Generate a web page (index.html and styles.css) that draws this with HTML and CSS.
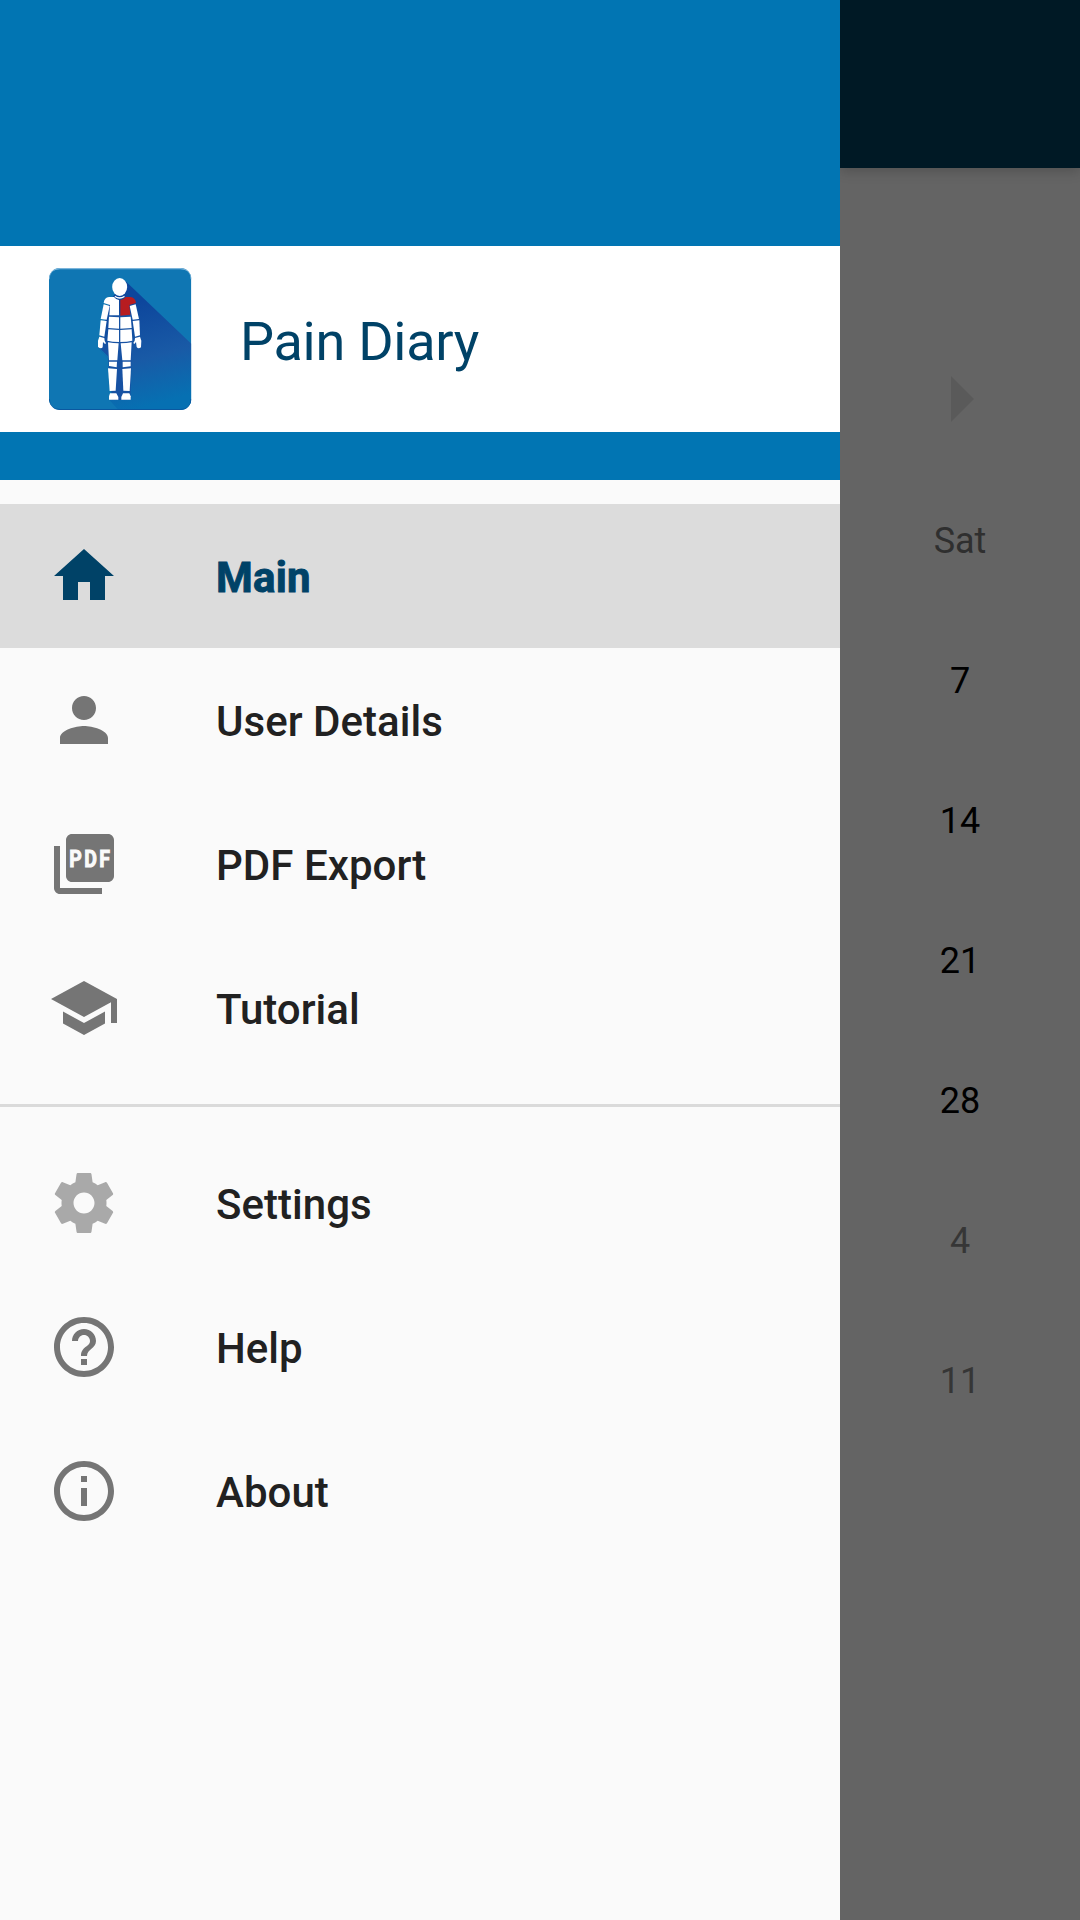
FILE: index.html
```html
<!DOCTYPE html>
<html lang="en">
<head>
<meta charset="utf-8">
<title>Pain Diary</title>
<link rel="stylesheet" href="styles.css">
</head>
<body>
<div class="screen">
  <aside class="drawer">
    <header class="drawer-header">
      <div class="brand">
        <svg class="logo" viewBox="24 21 432 432">
          <defs>
            <linearGradient id="shade" gradientUnits="userSpaceOnUse" x1="270" y1="130" x2="350" y2="430">
              <stop offset="0" stop-color="#0d469c"/>
              <stop offset=".55" stop-color="#195aa6"/>
              <stop offset="1" stop-color="#0670b2"/>
            </linearGradient>
            <clipPath id="tile"><rect x="27" y="24" width="427" height="426" rx="33"/></clipPath>
          </defs>
          <g clip-path="url(#tile)">
            <rect x="27" y="24" width="427" height="427" fill="#0f76b3"/>
            <path d="M257 64L454 251V451H236L208 420L236 330L174 263L210 120Z" fill="url(#shade)"/>
            <path d="M27 58Q27 25.500 60 25.500H421Q454 25.500 454 58" fill="none" stroke="#7bb5db" stroke-width="4"/>
            <path d="M28 417Q28 448.500 60 448.500H421Q453 448.500 453 417" fill="none" stroke="#0b58a0" stroke-width="3"/>
          </g>
          <path d="M174 263L208 300L208 420H232L240 260Z" fill="#0f76b3"/>
          <path d="M176 262L206 291L205 240Z" fill="#1752a3"/>
          <path d="M204 160H276V250L271 420H208L205 300Z" fill="#1752a3"/>
          <path d="M203 326L208 420L215 420L212 326Z" fill="#0f76b3"/>
          <path d="M229 380L250 250L252 418H236Z" fill="#1752a3"/>
          <g fill="#fff">
            <ellipse cx="239" cy="81" rx="22.500" ry="27"/>
            <path d="M225 107Q239 117 253 107L254 111Q239 122 224 111Z"/>
            <path d="M222 111Q228 119 237 120V166H208L210 135L191 129Q193 113 207 111Z"/>
            <path d="M191 133L209 138L200 179L182 177Z"/>
            <path d="M182 181L200 183L193 230L178 226Z"/>
            <path d="M178 230L193 234L194 242L198 250L195 252L189 246L188 262Q183 268 174 261L174 242Z"/>
            <path d="M287 133L269 138L278 179L297 177Z"/>
            <path d="M278 183L298 181L300 226L285 230Z"/>
            <path d="M285 234L300 230L304 242L303 262Q295 268 290 261L288 246L283 252L280 249L284 242Z"/>
            <path d="M207 170L237 172V206L205 204Z"/>
            <path d="M241 172L272 170L275 204L241 206Z"/>
            <path d="M205 208L237 210V246Q216 246 202 242Z"/>
            <path d="M241 210L275 208L277 242Q262 246 241 246Z"/>
            <path d="M204 247Q220 250 236 250L232 301H207Z"/>
            <path d="M242 250Q260 250 275 247L272 301H247Z"/>
            <path d="M207 305H231L230 322L207 318Z"/>
            <path d="M248 305H272V319L248 322Z"/>
            <path d="M204 325L231 327L227 392L209 393Z"/>
            <path d="M247 327L273 325L269 393L250 392Z"/>
            <path d="M210 400H229L235 411V419H207V409Z"/>
            <path d="M249 400H268L272 409V419H244V411Z"/>
          </g>
          <path d="M241 120Q250 119 257 111H271Q286 113 288 129L268 135L271 164L241 167Z" fill="#b71c20"/>
        </svg>
        <span class="brand-name">Pain Diary</span>
      </div>
    </header>
    <nav class="menu">
      <a class="item selected">
        <svg class="icon" viewBox="0 0 24 24"><path d="M10 20v-6h4v6h5v-8h3L12 3 2 12h3v8z"/></svg>
        <span class="label">Main</span>
      </a>
      <a class="item">
        <svg class="icon" viewBox="0 0 24 24"><path d="M12 12c2.210 0 4-1.790 4-4s-1.790-4-4-4-4 1.790-4 4 1.790 4 4 4zm0 2c-2.670 0-8 1.340-8 4v2h16v-2c0-2.660-5.330-4-8-4z"/></svg>
        <span class="label">User Details</span>
      </a>
      <a class="item">
        <svg class="icon" viewBox="0 0 24 24"><path d="M20 2H8c-1.100 0-2 .9-2 2v12c0 1.100.9 2 2 2h12c1.100 0 2-.9 2-2V4c0-1.100-.9-2-2-2zM4 6H2v14c0 1.100.9 2 2 2h14v-2H4V6z"/><text class="badge" transform="scale(.8 1)" x="8.900 15.150 21.400" y="12.900">PDF</text></svg>
        <span class="label">PDF Export</span>
      </a>
      <a class="item">
        <svg class="icon" viewBox="0 0 24 24"><path d="M5 13.180v4L12 21l7-3.820v-4L12 17l-7-3.820zM12 3L1 9l11 6 9-4.910V17h2V9L12 3z"/></svg>
        <span class="label">Tutorial</span>
      </a>
      <hr class="divider">
      <a class="item">
        <svg class="icon faded" viewBox="0 0 24 24"><path d="M19.430 12.980c.04-.32.07-.64.07-.98s-.03-.66-.07-.98l2.110-1.650c.19-.15.240-.42.120-.64l-2-3.460c-.12-.22-.39-.3-.61-.22l-2.490 1c-.52-.4-1.080-.73-1.690-.98l-.38-2.650C14.460 2.180 14.250 2 14 2h-4c-.25 0-.46.180-.49.420l-.38 2.650c-.61.250-1.170.590-1.690.980l-2.490-1c-.23-.09-.49 0-.61.220l-2 3.460c-.13.220-.07.490.12.640l2.110 1.650c-.04.320-.07.650-.07.980s.03.660.07.980l-2.110 1.650c-.19.150-.24.420-.12.640l2 3.460c.12.220.39.300.61.220l2.490-1c.52.400 1.080.730 1.690.980l.38 2.650c.03.240.24.420.49.420h4c.25 0 .46-.18.49-.42l.38-2.650c.61-.25 1.170-.59 1.690-.98l2.490 1c.23.090.49 0 .61-.22l2-3.460c.12-.22.07-.49-.12-.64l-2.110-1.650zM12 15.500c-1.930 0-3.500-1.570-3.500-3.500s1.570-3.500 3.500-3.500 3.500 1.570 3.500 3.500-1.570 3.500-3.500 3.500z"/></svg>
        <span class="label">Settings</span>
      </a>
      <a class="item">
        <svg class="icon" viewBox="0 0 24 24"><path d="M11 18h2v-2h-2v2zm1-16C6.480 2 2 6.480 2 12s4.480 10 10 10 10-4.480 10-10S17.520 2 12 2zm0 18c-4.410 0-8-3.590-8-8s3.590-8 8-8 8 3.590 8 8-3.590 8-8 8zm0-14c-2.210 0-4 1.790-4 4h2c0-1.100.9-2 2-2s2 .9 2 2c0 2-3 1.750-3 5h2c0-2.250 3-2.500 3-5 0-2.210-1.790-4-4-4z"/></svg>
        <span class="label">Help</span>
      </a>
      <a class="item">
        <svg class="icon" viewBox="0 0 24 24"><path d="M11 17h2v-6h-2v6zm1-15C6.480 2 2 6.480 2 12s4.480 10 10 10 10-4.480 10-10S17.520 2 12 2zm0 18c-4.410 0-8-3.590-8-8s3.590-8 8-8 8 3.590 8 8-3.590 8-8 8zM11 9h2V7h-2v2z"/></svg>
        <span class="label">About</span>
      </a>
    </nav>
  </aside>
  <main class="calendar">
    <div class="app-bar"></div>
    <div class="month-nav">
      <svg class="next" viewBox="0 0 23 46"><path d="M0 0L23 23L0 46Z"/></svg>
    </div>
    <div class="column">
      <span class="cell weekday">Sat</span>
      <span class="cell">7</span>
      <span class="cell">14</span>
      <span class="cell">21</span>
      <span class="cell">28</span>
      <span class="cell outside">4</span>
      <span class="cell outside">11</span>
    </div>
  </main>
</div>
</body>
</html>
```
FILE: styles.css
```css
* {
  box-sizing: border-box;
}

body {
  margin: 0;
  font-family: Roboto, "Liberation Sans", sans-serif;
}

.screen {
  display: flex;
  width: 1080px;
  height: 1920px;
  overflow: hidden;
}

.drawer {
  width: 840px;
  background: #fafafa;
}

.drawer-header {
  height: 480px;
  padding: 246px 0 48px;
  background: #0175b3;
}

.brand {
  display: flex;
  align-items: center;
  gap: 48px;
  height: 186px;
  padding: 0 48px;
  background: #fff;
}

.logo {
  width: 144px;
  height: 144px;
}

.brand-name {
  padding-top: 4px;
  color: #004267;
  font-size: 54px;
  letter-spacing: -.27px;
}

.menu {
  padding-top: 24px;
}

.item {
  display: flex;
  align-items: center;
  gap: 96px;
  height: 144px;
  padding: 0 48px;
  color: #212121;
}

.item.selected {
  background: #dcdcdc;
  color: #004267;
}

.icon {
  width: 72px;
  height: 72px;
  fill: #757575;
}

.selected .icon {
  fill: #004267;
}

.icon.faded {
  fill: #a9a9a9;
}

.badge {
  fill: #fafafa;
  stroke: #fafafa;
  stroke-width: .35px;
  font-size: 8.1px;
  font-weight: 700;
}

.label {
  padding-top: 3px;
  font-size: 42px;
  font-weight: 500;
  letter-spacing: .04px;
}

.selected .label {
  font-weight: 700;
  letter-spacing: .2px;
  -webkit-text-stroke: .9px #004267;
}

.divider {
  height: 3px;
  margin: 24px 0;
  border: 0;
  background: #dadada;
}

.calendar {
  width: 240px;
  overflow: hidden;
  background: #646464;
}

.app-bar {
  height: 168px;
  background: #001925;
  box-shadow: 0 3px 12px rgba(0, 0, 0, .2);
}

.month-nav {
  display: flex;
  justify-content: center;
  align-items: flex-end;
  height: 254px;
  padding-left: 4px;
}

.next {
  width: 23px;
  height: 46px;
  fill: #5a5a5a;
}

.column {
  display: flex;
  flex-direction: column;
  padding-top: 49px;
}

.cell {
  height: 140px;
  color: #000;
  font-size: 36px;
  line-height: 140px;
  text-align: center;
}

.weekday {
  color: #2f2f2f;
}

.outside {
  color: #363636;
}
```
